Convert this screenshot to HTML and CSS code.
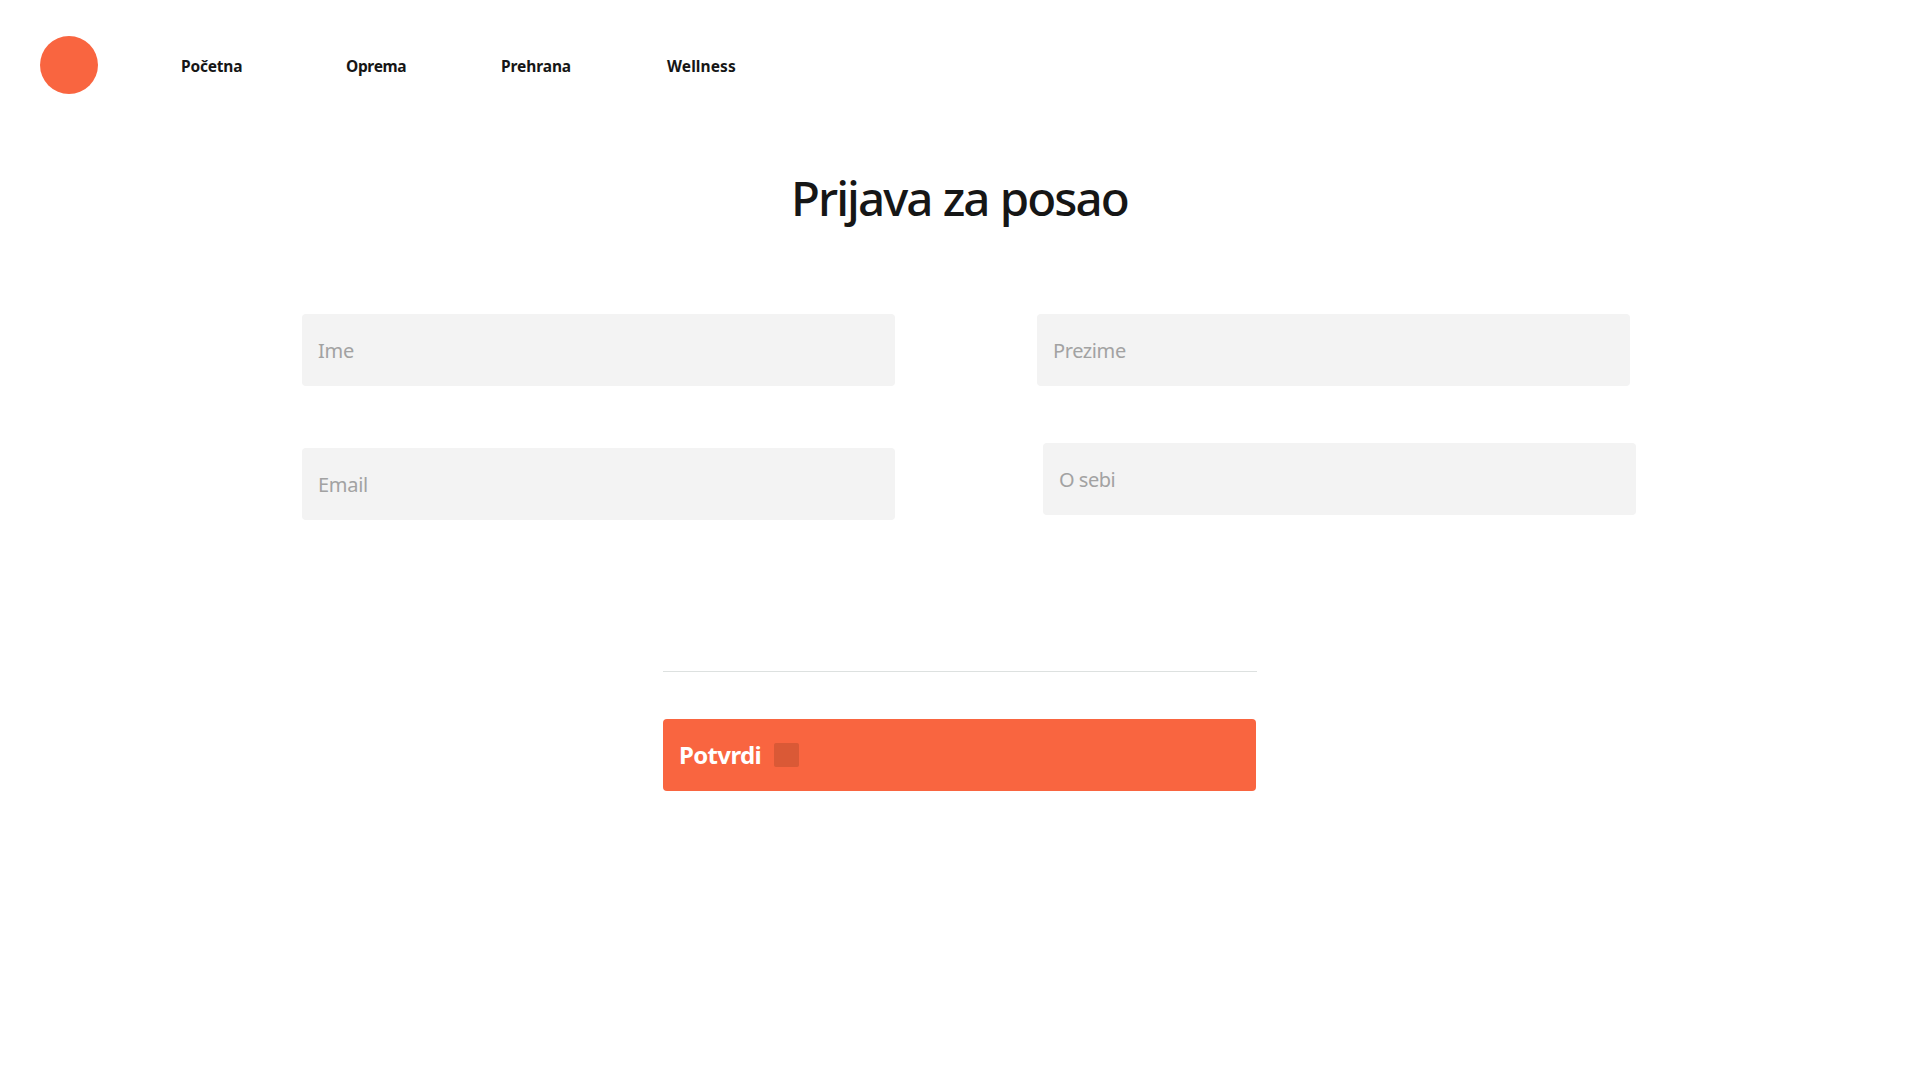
FILE: index.html
```html
<!DOCTYPE html>
<html lang="hr">
<head>
  <meta charset="utf-8">
  <title>Prijava za posao</title>
  <link rel="stylesheet" href="styles.css">
</head>
<body>
  <header class="header">
    <span class="logo"></span>
    <nav class="nav">
      <a class="nav-link nav-home">Početna</a>
      <a class="nav-link nav-gear">Oprema</a>
      <a class="nav-link nav-food">Prehrana</a>
      <a class="nav-link nav-wellness">Wellness</a>
    </nav>
  </header>
  <main class="main">
    <h1 class="title">Prijava za posao</h1>
    <form class="form">
      <div class="fields">
        <div class="column column-left">
          <label class="field"><span class="text-name">Ime</span></label>
          <label class="field"><span class="text-email">Email</span></label>
        </div>
        <div class="column column-right">
          <label class="field"><span class="text-surname">Prezime</span></label>
          <label class="field field-about"><span class="text-about">O sebi</span></label>
        </div>
      </div>
      <div class="divider"></div>
      <button class="submit" type="button"><span class="submit-text">Potvrdi</span><span class="submit-icon"></span></button>
    </form>
  </main>
</body>
</html>
```
FILE: styles.css
```css
* {
  box-sizing: border-box;
}

body {
  margin: 0;
  background: #fff;
  color: #161616;
  font-family: "Noto Sans", sans-serif;
}

.header {
  display: flex;
  align-items: center;
  height: 94px;
  padding: 36px 40px 0;
}

.logo {
  flex: none;
  width: 58px;
  height: 58px;
  border-radius: 50%;
  background: #f96540;
}

.nav {
  display: grid;
  grid-template-columns: 165px 155px 166px auto;
  margin-left: 83px;
  padding-top: 2px;
}

.nav-link {
  font-size: 15.5px;
  font-weight: 700;
  line-height: 24px;
  white-space: nowrap;
}

.nav-home {
  letter-spacing: -0.2px;
}

.nav-gear {
  letter-spacing: -0.35px;
}

.nav-food {
  letter-spacing: -0.1px;
}

.nav-wellness {
  letter-spacing: 0.1px;
}

.title {
  margin: 72px 0 0;
  padding-left: 791px;
  font-size: 47.5px;
  font-weight: 500;
  line-height: 64px;
  letter-spacing: -1.95px;
  word-spacing: 0.8px;
  white-space: nowrap;
}

.fields {
  display: flex;
  gap: 142px;
  margin-top: 84px;
  padding-left: 302px;
}

.column {
  display: flex;
  flex-direction: column;
  width: 593px;
}

.column-left {
  gap: 62px;
}

.column-right {
  gap: 57px;
}

.field {
  display: flex;
  align-items: center;
  height: 72px;
  padding: 2px 16px 0;
  border-radius: 4px;
  background: #f3f3f3;
  color: #a2a2a2;
  font-size: 20px;
  line-height: 28px;
}

.field-about {
  width: 593px;
  margin-left: 6px;
}

.text-name {
  letter-spacing: -0.2px;
}

.text-email {
  letter-spacing: -0.3px;
}

.text-surname {
  letter-spacing: -0.4px;
}

.text-about {
  letter-spacing: -0.5px;
}

.divider {
  width: 594px;
  height: 1px;
  margin: 151px 0 0 663px;
  background: #dde1e0;
}

.submit {
  display: flex;
  align-items: center;
  gap: 13px;
  width: 593px;
  height: 72px;
  margin: 47px 0 0 663px;
  padding: 0 16px;
  border: 0;
  border-radius: 4px;
  background: #f96540;
  color: #fff;
  font: 700 24px/32px "Noto Sans", sans-serif;
}

.submit-text {
  width: 82px;
  text-align: left;
  letter-spacing: -0.65px;
}

.submit-icon {
  width: 25px;
  height: 24px;
  border-radius: 2px;
  background: #da5936;
}
```
